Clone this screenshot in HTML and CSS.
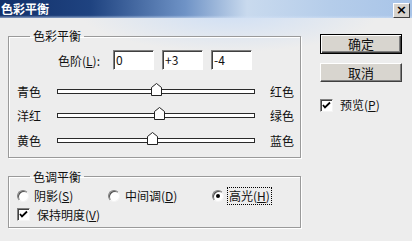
FILE: index.html
```html
<!DOCTYPE html>
<html lang="zh-CN">
<head>
    <meta charset="UTF-8">
    <title>色彩平衡</title>
    <link rel="stylesheet" href="styles.css">
</head>
<body>
    <div class="dialog">
        <!-- Barre de titre -->
        <div class="titlebar">
            <span class="title">色彩平衡</span>
            <span class="close">×</span>
        </div>
        <div class="dialog-body">
            <div class="main">
                <fieldset class="group group-color">
                    <legend>色彩平衡</legend>
                    <div class="levels">
                        <span class="levels-label">色阶(<u>L</u>):</span>
                        <span class="field">0</span>
                        <span class="field">+3</span>
                        <span class="field">-4</span>
                    </div>
                    <div class="slider-row">
                        <span class="lbl">青色</span>
                        <div class="track">
                            <svg class="thumb" style="--v:0" width="11" height="13" viewBox="0 0 11 13"><polygon points="0.5,4.5 5.5,0.5 10.5,4.5 10.5,12.5 0.5,12.5" fill="#fff" stroke="#222"/></svg>
                        </div>
                        <span class="lbl lbl-right">红色</span>
                    </div>
                    <div class="slider-row">
                        <span class="lbl">洋红</span>
                        <div class="track">
                            <svg class="thumb" style="--v:3" width="11" height="13" viewBox="0 0 11 13"><polygon points="0.5,4.5 5.5,0.5 10.5,4.5 10.5,12.5 0.5,12.5" fill="#fff" stroke="#222"/></svg>
                        </div>
                        <span class="lbl lbl-right">绿色</span>
                    </div>
                    <div class="slider-row">
                        <span class="lbl">黄色</span>
                        <div class="track">
                            <svg class="thumb" style="--v:-4" width="11" height="13" viewBox="0 0 11 13"><polygon points="0.5,4.5 5.5,0.5 10.5,4.5 10.5,12.5 0.5,12.5" fill="#fff" stroke="#222"/></svg>
                        </div>
                        <span class="lbl lbl-right">蓝色</span>
                    </div>
                </fieldset>

                <fieldset class="group group-tone">
                    <legend>色调平衡</legend>
                    <div class="radios">
                        <span class="option"><span class="radio"></span>阴影(<u>S</u>)</span>
                        <span class="option"><span class="radio"></span>中间调(<u>D</u>)</span>
                        <span class="option"><span class="radio checked"></span><span class="focus">高光(<u>H</u>)</span></span>
                    </div>
                    <div class="option check-row">
                        <span class="checkbox"><svg width="9" height="9" viewBox="0 0 9 9"><path d="M1 4 L3 6.5 L8 1.5" fill="none" stroke="#000" stroke-width="1.8"/></svg></span>
                        保持明度(<u>V</u>)
                    </div>
                </fieldset>
            </div>

            <div class="side">
                <div class="btn btn-default">确定</div>
                <div class="btn">取消</div>
                <div class="option preview">
                    <span class="checkbox"><svg width="9" height="9" viewBox="0 0 9 9"><path d="M1 4 L3 6.5 L8 1.5" fill="none" stroke="#000" stroke-width="1.8"/></svg></span>
                    预览(<u>P</u>)
                </div>
            </div>
        </div>
    </div>
</body>
</html>
```

FILE: styles.css
```css
/* Fenetre du dialogue */
body {
    margin: 0;
    font-family: "Noto Sans CJK SC", "Liberation Sans", sans-serif;
    font-size: 12px;
    color: #111;
    background: #ededed;
}

.dialog {
    width: 412px;
    height: 241px;
    overflow: hidden;
    background:
        radial-gradient(ellipse 150px 40px at 230px 12px, rgba(205, 222, 245, 0.95), rgba(237, 237, 237, 0)),
        #ededed;
}

/* Barre de titre */
.titlebar {
    height: 18px;
    display: flex;
    align-items: center;
    justify-content: space-between;
    background: linear-gradient(180deg, rgba(0, 0, 0, 0) 85%, rgba(210, 225, 245, 0.6) 100%),
        linear-gradient(90deg, #12306a 0%, #1f4380 22%, #6f93c6 45%, #c9daee 60%, #b5cdea 80%, #a8c4e8 100%);
}

.title {
    color: #fff;
    font-weight: bold;
    font-size: 12px;
    line-height: 18px;
    padding-left: 1px;
}

.close {
    width: 15px;
    height: 13px;
    margin: 2px 2px 0 0;
    background: #d6d3ce;
    border: 1px solid;
    border-color: #fff #404040 #404040 #fff;
    font-family: "DejaVu Sans", sans-serif;
    font-weight: bold;
    font-size: 13px;
    line-height: 12px;
    text-align: center;
    color: #000;
}

.dialog-body {
    display: flex;
    padding-left: 8px;
}

.main {
    width: 293px;
}

/* Cadres groupes */
.group {
    margin: 0;
    padding: 0 6px 4px 8px;
    border: 1px solid #9a9a9a;
    box-shadow: inset 1px 1px #fff, 1px 1px #fff;
    min-width: 0;
}

.group legend {
    padding: 0 3px;
    margin-left: 13px;
    font-size: 12px;
    line-height: 14px;
}

.group-color {
    margin-top: 11px;
}

.group-tone {
    margin-top: 12px;
    padding-bottom: 5px;
}

/* Ligne des niveaux */
.levels {
    display: flex;
    align-items: center;
    gap: 8px;
    margin: 6px 0 8px;
    padding-left: 41px;
    height: 22px;
}

.levels-label {
    width: 47px;
}

.field {
    width: 37px;
    height: 18px;
    line-height: 18px;
    padding-left: 2px;
    background: #fff;
    border: 1px solid;
    border-color: #808080 #fff #fff #808080;
    box-shadow: inset 1px 1px #404040;
}

/* Curseurs */
.slider-row {
    display: flex;
    align-items: center;
    height: 24.5px;
}

.lbl {
    width: 40px;
}

.lbl-right {
    width: auto;
    margin-left: auto;
}

.track {
    position: relative;
    width: 196px;
    height: 3px;
    background: #fff;
    border: 1px solid #2a2a2a;
}

.thumb {
    position: absolute;
    top: -7px;
    left: calc((var(--v) + 100) / 200 * 100% - 5px);
}

/* Boutons radio et cases */
.radios {
    display: grid;
    grid-template-columns: 91px 104px auto;
    margin-top: 5px;
}

.option {
    display: flex;
    align-items: center;
    height: 14px;
    line-height: 14px;
}

.radio {
    width: 10px;
    height: 10px;
    margin-right: 5px;
    border-radius: 50%;
    background: #fff;
    border: 1px solid;
    border-color: #808080 #f4f4f4 #f4f4f4 #808080;
    box-shadow: inset 1px 1px #505050;
    display: flex;
    align-items: center;
    justify-content: center;
}

.radio.checked::after {
    content: "";
    width: 4px;
    height: 4px;
    border-radius: 50%;
    background: #000;
}

.focus {
    outline: 1px dotted #000;
    outline-offset: 1px;
}

.checkbox {
    width: 9px;
    height: 9px;
    margin-right: 7px;
    padding: 1px;
    background: #fff;
    border: 1px solid;
    border-color: #808080 #f4f4f4 #f4f4f4 #808080;
    box-shadow: inset 1px 1px #404040;
    display: flex;
}

.check-row {
    margin-top: 5px;
}

/* Colonne des boutons */
.side {
    display: flex;
    flex-direction: column;
    margin-left: 19px;
    padding-top: 16px;
    width: 82px;
}

.btn {
    height: 17px;
    line-height: 17px;
    text-align: center;
    background: #d8d5cf;
    border: 1px solid;
    border-color: #fff #404040 #404040 #fff;
    box-shadow: inset -1px -1px #808080;
    font-size: 13px;
}

.btn-default {
    border-color: #000;
    box-shadow: inset 1px 1px #fff, inset -1px -1px #404040, inset -2px -2px #808080;
    height: 18px;
}

.btn + .btn {
    margin-top: 9px;
}

.preview {
    margin-top: 16px;
}
```
